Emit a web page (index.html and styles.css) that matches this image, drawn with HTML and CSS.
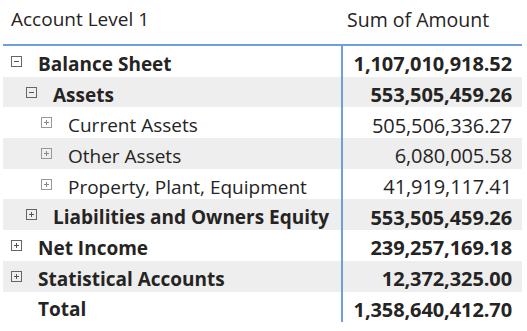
FILE: index.html
```html
<!DOCTYPE html>
<html>
<head>
<meta charset="utf-8">
<link rel="stylesheet" href="styles.css">
</head>
<body>
<div class="matrix">
  <div class="head">
    <div class="c1 hcell">Account Level 1</div>
    <div class="c2 hcell">Sum of Amount</div>
  </div>
  <div class="row b l0"><div class="c1"><span class="ic minus"></span><span class="t">Balance Sheet</span></div><div class="c2"><span class="t">1,107,010,918.52</span></div></div>
  <div class="row b l1 alt"><div class="c1"><span class="ic minus"></span><span class="t">Assets</span></div><div class="c2"><span class="t">553,505,459.26</span></div></div>
  <div class="row l2"><div class="c1"><span class="ic plus light"></span><span class="t">Current Assets</span></div><div class="c2"><span class="t">505,506,336.27</span></div></div>
  <div class="row l2 alt"><div class="c1"><span class="ic plus light"></span><span class="t">Other Assets</span></div><div class="c2"><span class="t">6,080,005.58</span></div></div>
  <div class="row l2"><div class="c1"><span class="ic plus light"></span><span class="t">Property, Plant, Equipment</span></div><div class="c2"><span class="t">41,919,117.41</span></div></div>
  <div class="row b l1 alt"><div class="c1"><span class="ic plus"></span><span class="t">Liabilities and Owners Equity</span></div><div class="c2"><span class="t">553,505,459.26</span></div></div>
  <div class="row b l0"><div class="c1"><span class="ic plus"></span><span class="t">Net Income</span></div><div class="c2"><span class="t">239,257,169.18</span></div></div>
  <div class="row b l0 alt"><div class="c1"><span class="ic plus"></span><span class="t">Statistical Accounts</span></div><div class="c2"><span class="t">12,372,325.00</span></div></div>
  <div class="row b l0 total"><div class="c1"><span class="ic none"></span><span class="t">Total</span></div><div class="c2"><span class="t">1,358,640,412.70</span></div></div>
</div>
</body>
</html>
```
FILE: styles.css
```css
html, body { margin: 0; padding: 0; background: #fff; }
body { font-family: "Open Sans", "Noto Sans", sans-serif; color: #252423; font-size: 19px; }
.matrix { width: 519px; margin-left: 3px; }
.head { display: flex; height: 44px; border-bottom: 2px solid #6f9fd8; align-items: center; }
.hcell { font-weight: 400; color: #252423; padding-bottom: 6px; box-sizing: border-box; }
.head .c1 { padding-left: 8px; }
.head .c2 { padding-left: 6px; justify-content: flex-start; font-size: 19.5px; }
.c1 { box-sizing: border-box; width: 338px; flex: none; display: flex; align-items: center; white-space: nowrap; }
.c2 { flex: 1; display: flex; justify-content: flex-end; padding-right: 10px; white-space: nowrap; }
.row { display: flex; height: 30.7px; align-items: center; }
.row .c1 { height: 100%; }
.row .c2 { height: 100%; align-items: center; border-left: 2px solid #6f9fd8; font-size: 20px; letter-spacing: -0.1px; }
.t { padding-top: 5px; }
.alt { background: #eeeeee; }
.b { font-weight: 700; }
.ic { width: 11px; height: 11px; box-sizing: border-box; border: 1px solid #666; position: relative; margin-right: 16px; flex: none; }
.ic.light { border-color: #999; }
.ic::before, .ic::after { content: ""; position: absolute; background: #555; }
.ic.light::before, .ic.light::after { background: #888; }
.ic::before { left: 2px; right: 2px; top: 4px; height: 1px; }
.plus::after { top: 2px; bottom: 2px; left: 4px; width: 1px; }
.ic.none { border: none; }
.ic.none::before { display: none; }
.l0 .c1 { padding-left: 8px; }
.l1 .c1 { padding-left: 23px; }
.l2 .c1 { padding-left: 38px; }
```
